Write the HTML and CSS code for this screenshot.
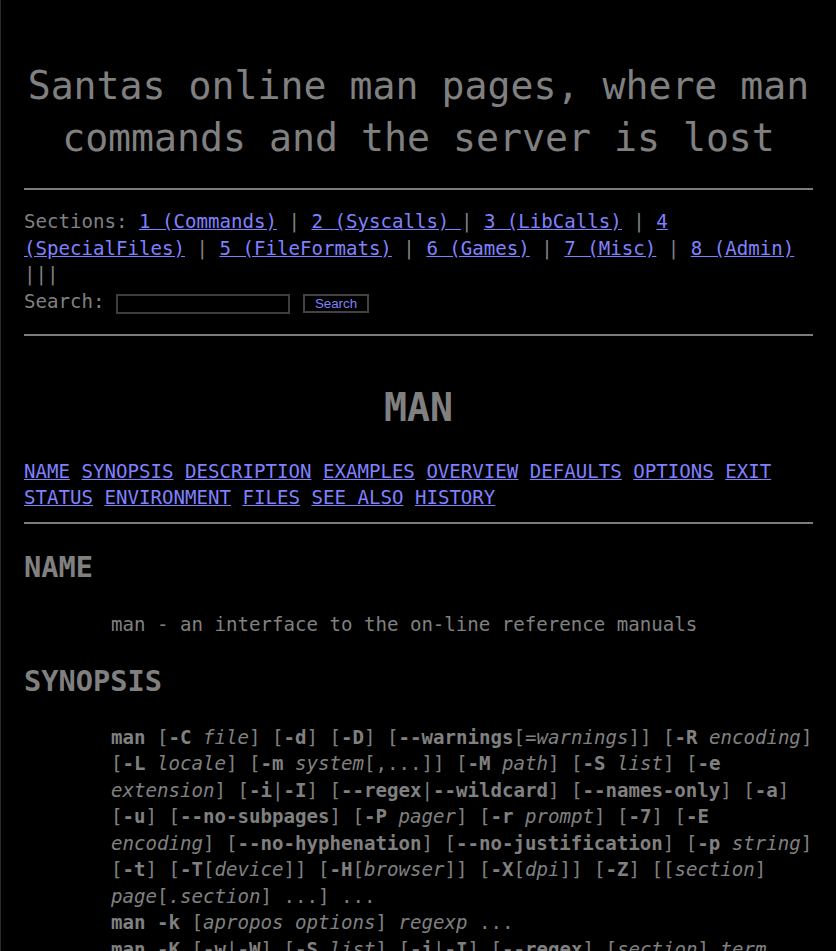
FILE: index.html
```html
<!DOCTYPE html>
<html lang="en">
<head>
<meta charset="utf-8">
<title>MAN - Santas online man pages</title>
<link rel="stylesheet" href="styles.css">
</head>
<body>
<h1 class="site-title">Santas online man pages, where man commands and the server is lost</h1>
<hr class="rule rule-head">
<div class="sections">Sections: <a href="#">1 (Commands)</a> | <a href="#">2 (Syscalls) </a>| <a href="#">3 (LibCalls)</a> | <a href="#">4 (SpecialFiles)</a> | <a href="#">5 (FileFormats)</a> | <a href="#">6 (Games)</a> | <a href="#">7 (Misc)</a> | <a href="#">8 (Admin)</a> |||</div>
<form class="search">
  <label class="search-label" for="q">Search:</label>
  <input class="search-input" id="q" type="text">
  <button class="search-btn" type="button">Search</button>
</form>
<hr class="rule rule-search">
<h1 class="page-title">MAN</h1>
<nav class="toc"><a href="#name">NAME</a> <a href="#">SYNOPSIS</a> <a href="#">DESCRIPTION</a> <a href="#">EXAMPLES</a> <a href="#">OVERVIEW</a> <a href="#">DEFAULTS</a> <a href="#">OPTIONS</a> <a href="#">EXIT STATUS</a> <a href="#">ENVIRONMENT</a> <a href="#">FILES</a> <a href="#">SEE ALSO</a> <a href="#">HISTORY</a></nav>
<hr class="rule rule-toc">
<h2 class="sec-title sec-first" id="name">NAME</h2>
<p class="sec-body">man - an interface to the on-line reference manuals</p>
<h2 class="sec-title">SYNOPSIS</h2>
<p class="sec-body synopsis"><b>man</b> [<b>-C</b> <i>file</i>] [<b>-d</b>] [<b>-D</b>] [<b>--warnings</b>[=<i>warnings</i>]] [<b>-R</b> <i>encoding</i>]<br>[<b>-L</b> <i>locale</i>] [<b>-m</b> <i>system</i>[,...]] [<b>-M</b> <i>path</i>] [<b>-S</b> <i>list</i>] [<b>-e</b><br><i>extension</i>] [<b>-i</b>|<b>-I</b>] [<b>--regex</b>|<b>--wildcard</b>] [<b>--names-only</b>] [<b>-a</b>]<br>[<b>-u</b>] [<b>--no-subpages</b>] [<b>-P</b> <i>pager</i>] [<b>-r</b> <i>prompt</i>] [<b>-7</b>] [<b>-E</b><br><i>encoding</i>] [<b>--no-hyphenation</b>] [<b>--no-justification</b>] [<b>-p</b> <i>string</i>]<br>[<b>-t</b>] [<b>-T</b>[<i>device</i>]] [<b>-H</b>[<i>browser</i>]] [<b>-X</b>[<i>dpi</i>]] [<b>-Z</b>] [[<i>section</i>]<br><i>page</i>[<i>.section</i>] ...] ...<br><b>man -k</b> [<i>apropos options</i>] <i>regexp</i> ...<br><b>man -K</b> [<b>-w</b>|<b>-W</b>] [<b>-S</b> <i>list</i>] [<b>-i</b>|<b>-I</b>] [<b>--regex</b>] [<i>section</i>] <i>term</i> ...<br><b>man -f</b> [<i>whatis options</i>] <i>page</i> ...</p>
</body>
</html>
```
FILE: styles.css
```css
html {
  background: #000;
  box-shadow: inset 1px 0 0 #2a2a2a;
  min-height: 100%;
}

body {
  margin: 0;
  padding: 60px 23px 40px 24px;
  font-family: "DejaVu Sans Mono", monospace;
  font-size: 19.1px;
  line-height: 26.5px;
  color: #808080;
}

a {
  color: #8080ff;
  text-decoration: underline;
}

.site-title {
  margin: 0;
  font-size: 38.2px;
  line-height: 52px;
  font-weight: normal;
  text-align: center;
}

.rule {
  border: 0;
  height: 0;
  border-top: 2px solid #7c7c7c;
  margin: 0;
}

.rule-head { margin-top: 24px; }
.rule-search { margin-top: 19px; }
.rule-toc { margin-top: 10px; }

.sections {
  margin-top: 19px;
}

.search {
  display: flex;
  align-items: flex-end;
  height: 26.5px;
  margin: 0;
}

.search-label {
  align-self: stretch;
}

.search-input {
  box-sizing: border-box;
  width: 174px;
  height: 20px;
  margin: 0 0 1px 11.5px;
  padding: 0 4px;
  border: 2px solid #3e3e3e;
  background: #000;
  color: #808080;
  font-family: "Liberation Sans", sans-serif;
  font-size: 13px;
}

.search-btn {
  box-sizing: border-box;
  width: 66px;
  height: 19px;
  margin: 0 0 2px 13px;
  padding: 0;
  border: 2px solid #424242;
  background: #000;
  color: #8080ff;
  font-family: "Liberation Sans", sans-serif;
  font-size: 13.3px;
  line-height: 15px;
}

.page-title {
  margin: 45.7px 0 0;
  font-size: 38.2px;
  line-height: 52px;
  font-weight: bold;
  text-align: center;
}

.toc {
  margin-top: 25.3px;
}

.sec-title {
  margin: 24px 0 0;
  font-size: 28.65px;
  line-height: 39px;
  font-weight: bold;
}

.sec-first {
  margin-top: 23.6px;
}

.sec-body {
  margin: 25.4px 0 0;
  padding-left: 87px;
}

.synopsis {
  margin-top: 23.5px;
  white-space: nowrap;
}

.synopsis i {
  font-style: italic;
}
```
